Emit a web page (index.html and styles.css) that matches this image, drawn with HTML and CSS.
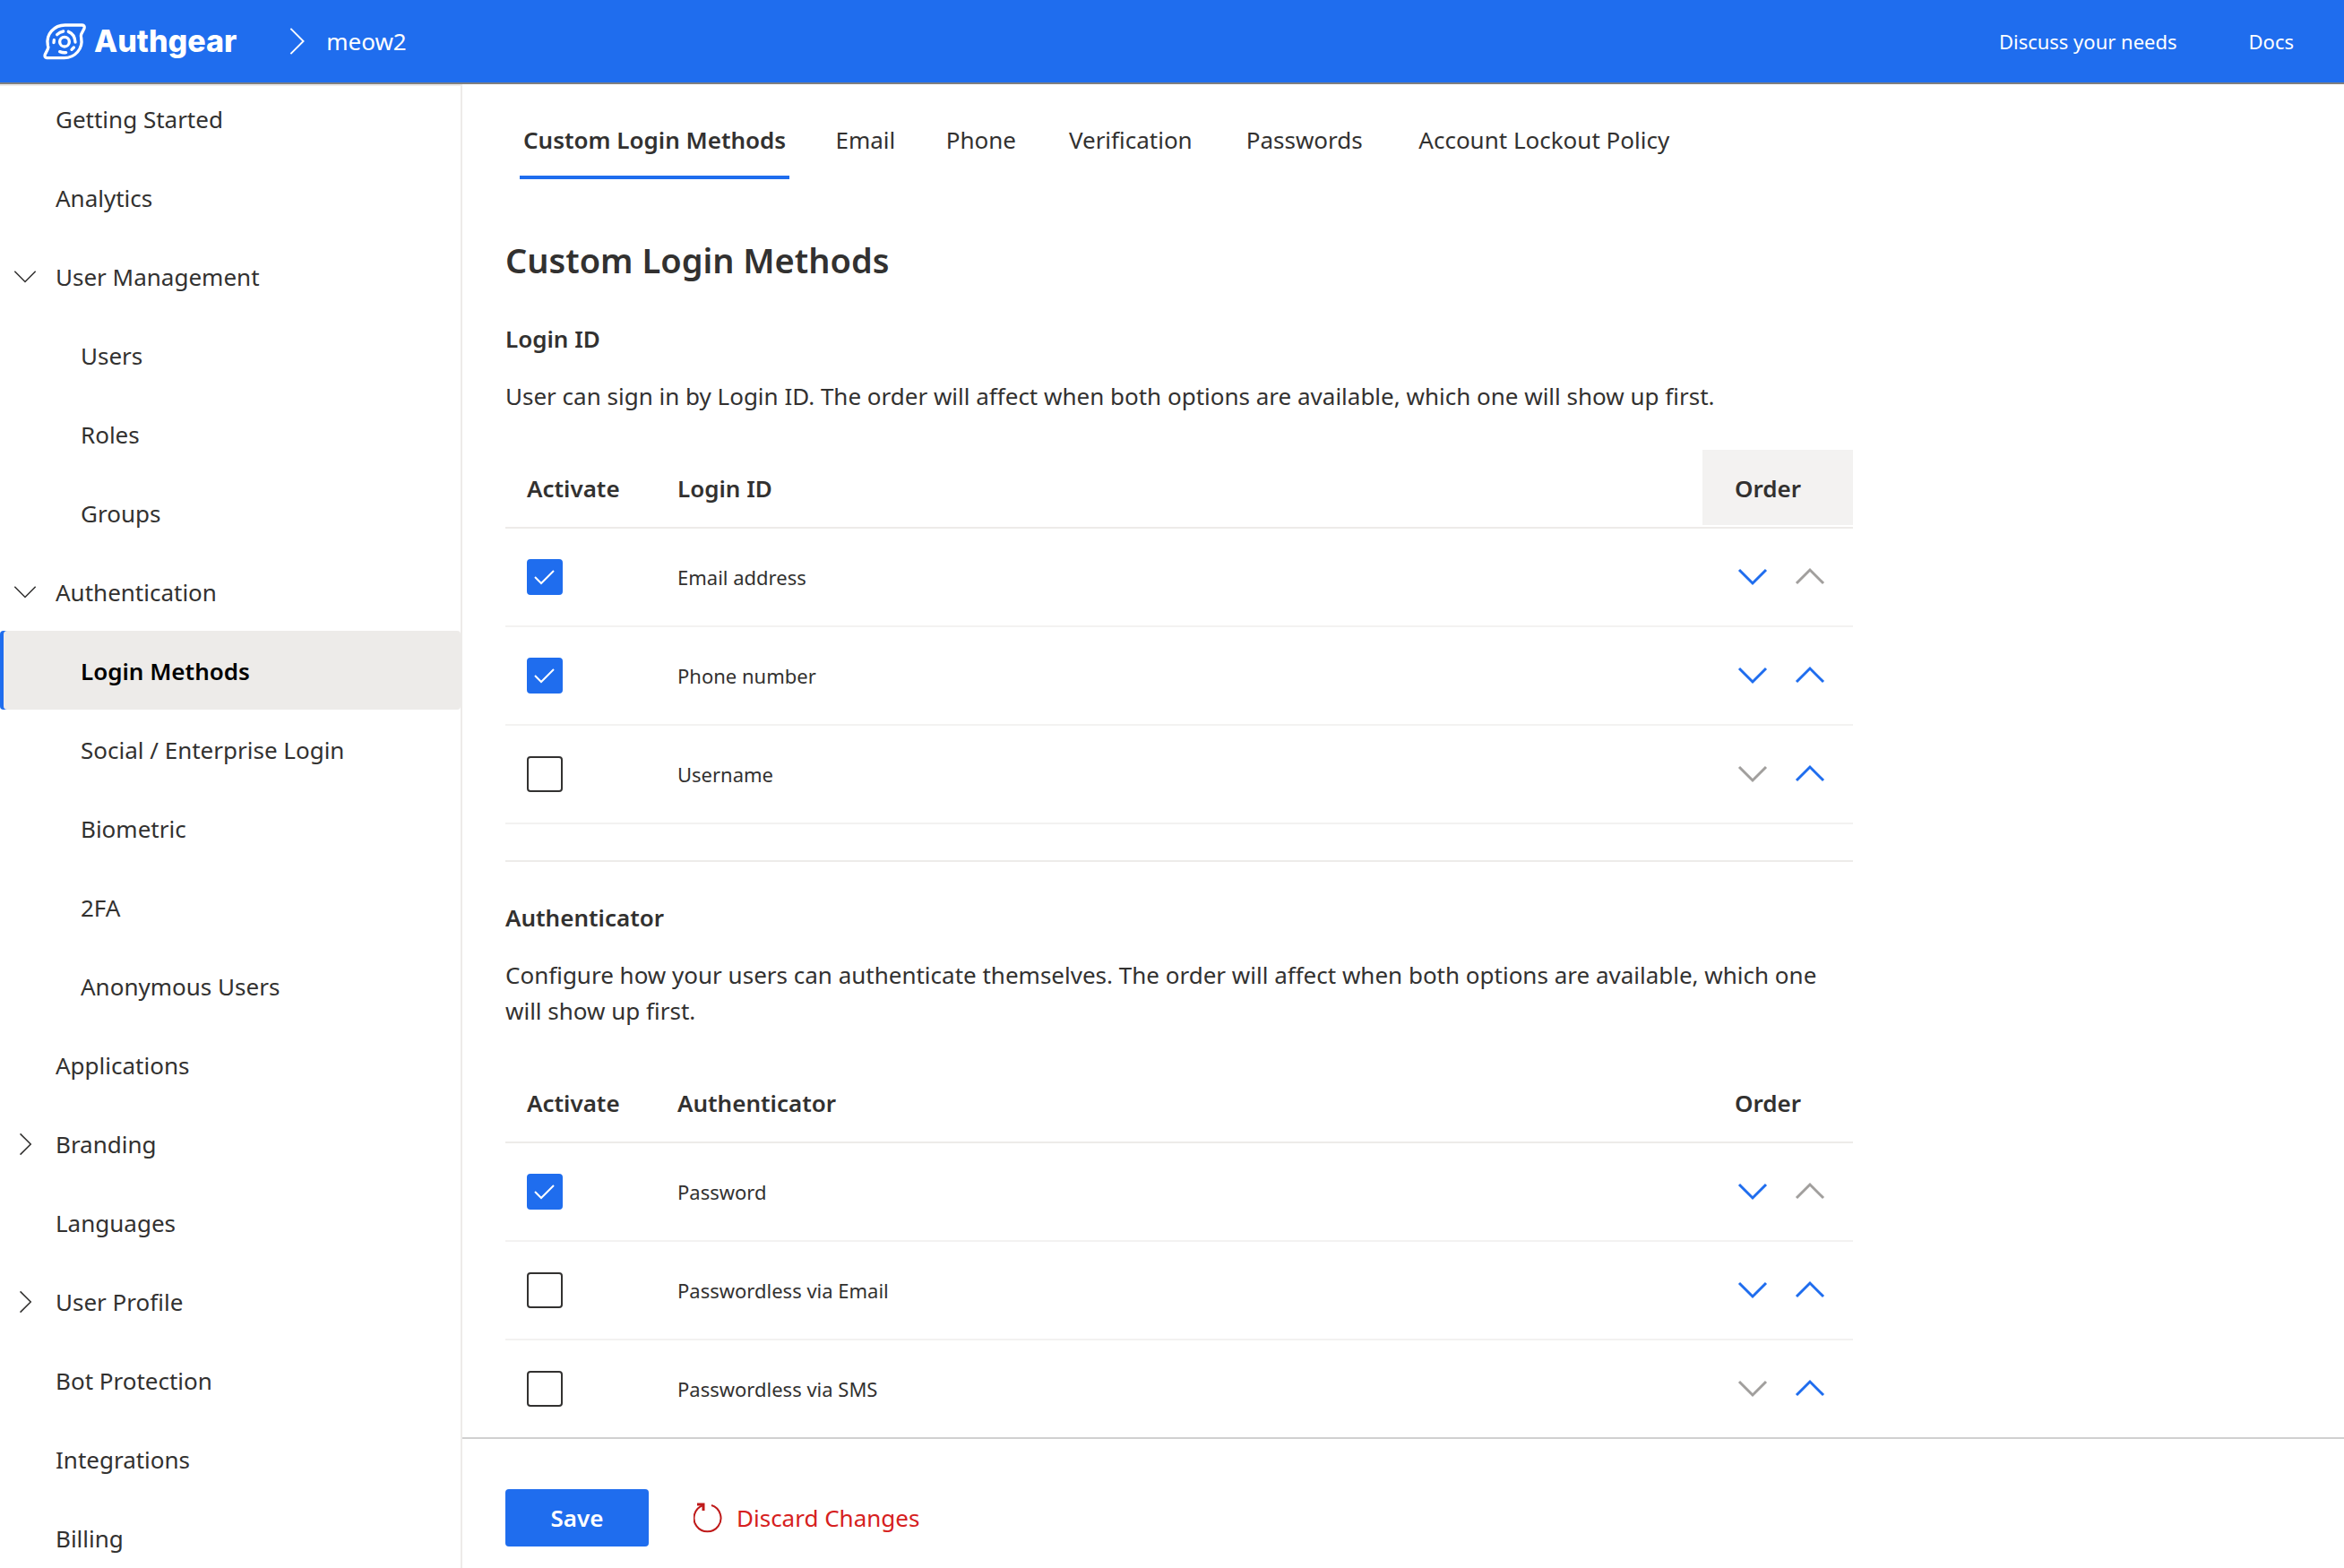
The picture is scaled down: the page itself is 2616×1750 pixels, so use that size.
FILE: index.html
```html
<!DOCTYPE html>
<html lang="en">
<head>
<meta charset="utf-8">
<meta name="viewport" content="width=device-width, initial-scale=1">
<title>Login Methods - Authgear</title>
<link rel="stylesheet" href="styles.css">
</head>
<body>
<svg class="sprite" aria-hidden="true">
  <symbol id="chevron-down" viewBox="0 0 36 36"><path d="M3 10 18 25 33 10" fill="none" stroke="currentColor"/></symbol>
  <symbol id="chevron-up" viewBox="0 0 36 36"><path d="M3 25 18 10 33 25" fill="none" stroke="currentColor"/></symbol>
  <symbol id="chevron-right" viewBox="0 0 36 36"><path d="M11 3 26 18 11 33" fill="none" stroke="currentColor"/></symbol>
</svg>

<header class="topbar">
  <a class="brand" href="#">
    <svg class="brand-mark" viewBox="50 40 150 126" aria-hidden="true">
      <g fill="none" stroke="#fff" stroke-width="10" stroke-linecap="round" stroke-linejoin="round">
        <path d="M127 49H184Q194 50 191 60L181 80Q179 86 181 92C188 128 160 159 124 159H66Q56 157 60 147L69 129Q72 123 69 116C62 80 90 49 127 49Z"/>
        <circle cx="125" cy="105" r="16"/>
        <path d="M90 99 89 108M100 81Q109 72 121 70M138 71Q159 79 161 106M149 131 156 124M109 138Q119 142 130 141"/>
      </g>
    </svg>
    <span class="brand-name">Authgear</span>
  </a>
  <svg class="crumb-icon" aria-hidden="true"><use href="#chevron-right"/></svg>
  <a class="crumb" href="#">meow2</a>
  <nav class="topbar-links">
    <a href="#">Discuss your needs</a>
    <a href="#">Docs</a>
  </nav>
</header>

<div class="shell">
  <aside class="sidebar">
    <nav class="menu">
      <a class="item" href="#">Getting Started</a>
      <a class="item" href="#">Analytics</a>
      <a class="item" href="#"><svg class="item-icon"><use href="#chevron-down"/></svg>User Management</a>
      <a class="item sub" href="#">Users</a>
      <a class="item sub" href="#">Roles</a>
      <a class="item sub" href="#">Groups</a>
      <a class="item" href="#"><svg class="item-icon"><use href="#chevron-down"/></svg>Authentication</a>
      <a class="item sub current" href="#" aria-current="page">Login Methods</a>
      <a class="item sub" href="#">Social / Enterprise Login</a>
      <a class="item sub" href="#">Biometric</a>
      <a class="item sub" href="#">2FA</a>
      <a class="item sub" href="#">Anonymous Users</a>
      <a class="item" href="#">Applications</a>
      <a class="item" href="#"><svg class="item-icon"><use href="#chevron-right"/></svg>Branding</a>
      <a class="item" href="#">Languages</a>
      <a class="item" href="#"><svg class="item-icon"><use href="#chevron-right"/></svg>User Profile</a>
      <a class="item" href="#">Bot Protection</a>
      <a class="item" href="#">Integrations</a>
      <a class="item" href="#">Billing</a>
    </nav>
  </aside>

  <main class="main">
    <div class="content">
      <div class="tabs" role="tablist">
        <button class="tab selected" role="tab" aria-selected="true" data-label="Custom Login Methods">Custom Login Methods</button>
        <button class="tab" role="tab" data-label="Email">Email</button>
        <button class="tab" role="tab" data-label="Phone">Phone</button>
        <button class="tab" role="tab" data-label="Verification">Verification</button>
        <button class="tab" role="tab" data-label="Passwords">Passwords</button>
        <button class="tab" role="tab" data-label="Account Lockout Policy">Account Lockout Policy</button>
      </div>

      <h1 class="title">Custom Login Methods</h1>

      <section class="section">
        <h2 class="heading">Login ID</h2>
        <p class="text">User can sign in by Login ID. The order will affect when both options are available, which one will show up first.</p>
        <table class="list">
          <thead><tr><th class="col-check">Activate</th><th>Login ID</th><th class="col-order"><span class="order-label hovered">Order</span></th></tr></thead>
          <tbody>
            <tr>
              <td><input class="check" type="checkbox" id="email" checked></td>
              <td><label for="email">Email address</label></td>
              <td><div class="arrows"><button class="arrow" aria-label="Move down"><svg><use href="#chevron-down"/></svg></button><button class="arrow" aria-label="Move up" disabled><svg><use href="#chevron-up"/></svg></button></div></td>
            </tr>
            <tr>
              <td><input class="check" type="checkbox" id="phone" checked></td>
              <td><label for="phone">Phone number</label></td>
              <td><div class="arrows"><button class="arrow" aria-label="Move down"><svg><use href="#chevron-down"/></svg></button><button class="arrow" aria-label="Move up"><svg><use href="#chevron-up"/></svg></button></div></td>
            </tr>
            <tr>
              <td><input class="check" type="checkbox" id="username"></td>
              <td><label for="username">Username</label></td>
              <td><div class="arrows"><button class="arrow" aria-label="Move down" disabled><svg><use href="#chevron-down"/></svg></button><button class="arrow" aria-label="Move up"><svg><use href="#chevron-up"/></svg></button></div></td>
            </tr>
          </tbody>
        </table>
      </section>

      <hr class="rule">

      <section class="section">
        <h2 class="heading">Authenticator</h2>
        <p class="text">Configure how your users can authenticate themselves. The order will affect when both options are available, which one will show up first.</p>
        <table class="list">
          <thead><tr><th class="col-check">Activate</th><th>Authenticator</th><th class="col-order"><span class="order-label">Order</span></th></tr></thead>
          <tbody>
            <tr>
              <td><input class="check" type="checkbox" id="password" checked></td>
              <td><label for="password">Password</label></td>
              <td><div class="arrows"><button class="arrow" aria-label="Move down"><svg><use href="#chevron-down"/></svg></button><button class="arrow" aria-label="Move up" disabled><svg><use href="#chevron-up"/></svg></button></div></td>
            </tr>
            <tr>
              <td><input class="check" type="checkbox" id="otp-email"></td>
              <td><label for="otp-email">Passwordless via Email</label></td>
              <td><div class="arrows"><button class="arrow" aria-label="Move down"><svg><use href="#chevron-down"/></svg></button><button class="arrow" aria-label="Move up"><svg><use href="#chevron-up"/></svg></button></div></td>
            </tr>
            <tr>
              <td><input class="check" type="checkbox" id="otp-sms"></td>
              <td><label for="otp-sms">Passwordless via SMS</label></td>
              <td><div class="arrows"><button class="arrow" aria-label="Move down" disabled><svg><use href="#chevron-down"/></svg></button><button class="arrow" aria-label="Move up"><svg><use href="#chevron-up"/></svg></button></div></td>
            </tr>
          </tbody>
        </table>
      </section>
    </div>

    <footer class="actions">
      <button class="save">Save</button>
      <button class="discard">
        <svg class="discard-icon" viewBox="0 0 32 34" aria-hidden="true"><g fill="none" stroke="currentColor"><path d="M4 2H11V9" stroke-width="3"/><path d="M11 3A15 15 0 1 0 20 3" stroke-width="2"/></g></svg>
        Discard Changes
      </button>
    </footer>
  </main>
</div>
</body>
</html>
```
FILE: styles.css
```css
:root {
  --blue: #1f6dee;
  --text: #323130;
  --line: #edebe9;
  --line-light: #f3f2f1;
  --muted: #a19f9d;
}

* { box-sizing: border-box; }

body {
  margin: 0;
  height: 100vh;
  display: flex;
  flex-direction: column;
  overflow: hidden;
  background: #fff;
  color: var(--text);
  font-family: "Noto Sans", "Open Sans", sans-serif;
  font-size: 26px;
  line-height: 40px;
}

a { color: inherit; text-decoration: none; }

button {
  padding: 0;
  border: 0;
  background: none;
  color: inherit;
  font: inherit;
}

.sprite { display: none; }

/* Top bar */
.topbar {
  flex: none;
  display: flex;
  align-items: center;
  height: 94px;
  padding: 0 56px 0 47px;
  border-bottom: 2px solid #808080;
  background: var(--blue);
  color: #fff;
}

.brand { display: flex; align-items: center; gap: 8px; }
.brand-mark { width: 50px; height: 42px; }
.brand-name { font: 800 34px/42px Inter, sans-serif; }
.crumb-icon { width: 34px; height: 34px; margin: 0 16px 0 50px; stroke-width: 2px; }
.topbar-links { display: flex; gap: 80px; margin-left: auto; font-size: 22px; }

/* Page shell */
.shell { flex: 1; display: flex; min-height: 0; }

.sidebar {
  flex: none;
  width: 516px;
  overflow: hidden;
  border-top: 2px solid var(--line);
  border-right: 2px solid var(--line);
}

.menu { margin-top: -8px; }

.item {
  position: relative;
  display: flex;
  align-items: center;
  height: 88px;
  padding: 2px 0 0 62px;
}

.item.sub { padding-left: 90px; }

.item.current {
  border-radius: 4px;
  background: #edebe9;
  box-shadow: inset 4px 0 var(--blue);
  color: #000;
  font-weight: 600;
}

.item-icon { position: absolute; left: 14px; width: 28px; height: 28px; stroke-width: 2px; }

.main { flex: 1; display: flex; flex-direction: column; min-width: 0; }

.content { flex: 1; min-height: 0; overflow: hidden; padding: 22px 48px 0; }
.content > * { max-width: 1504px; }

/* Tabs */
.tabs { display: flex; gap: 46px; padding-left: 16px; }

.tab {
  display: grid;
  padding: 20px 4px;
  border-bottom: 4px solid transparent;
  white-space: nowrap;
}

/* Reserves the bold width so that the row does not shift on selection */
.tab::after {
  content: attr(data-label);
  height: 0;
  overflow: hidden;
  visibility: hidden;
  font-weight: 600;
}

.tab.selected { border-color: var(--blue); font-weight: 600; }

/* Sections */
.title { margin: 62px 0 0; font-size: 38px; font-weight: 600; line-height: 56px; }
.heading { margin: 40px 0 0; font-size: 26px; font-weight: 600; line-height: 40px; }
.text { margin: 24px 0 40px; }

.list { width: 100%; border-collapse: separate; border-spacing: 0; table-layout: fixed; }
.list th { height: 88px; padding: 0 24px; border-bottom: 2px solid var(--line); font-weight: 600; text-align: left; }
.list td { height: 110px; padding: 0 24px; border-bottom: 2px solid var(--line-light); font-size: 22px; }
.list .col-check { width: 168px; }
.list .col-order { width: 168px; padding: 0; }
.list td:last-child { padding: 0; }

.order-label { display: block; margin-bottom: 2px; padding: 23px 36px 21px; }
.order-label.hovered { background: #f3f2f1; }

.check {
  appearance: none;
  display: block;
  width: 40px;
  height: 40px;
  margin: 0;
  border: 2px solid var(--text);
  border-radius: 4px;
}

.check:checked {
  border-color: var(--blue);
  background: var(--blue) url("data:image/svg+xml,%3Csvg xmlns='http://www.w3.org/2000/svg' viewBox='0 0 36 36'%3E%3Cpath d='M7 18 14 25 28 11' fill='none' stroke='%23fff' stroke-width='2'/%3E%3C/svg%3E");
}

.arrows { display: flex; gap: 28px; padding-left: 38px; }
.arrow { display: flex; color: var(--blue); }
.arrow svg { width: 36px; height: 36px; stroke-width: 3px; }
.arrow:disabled { color: var(--muted); }

.rule { height: 2px; margin: 40px 0 42px; border: 0; background: var(--line); }

/* Footer actions */
.actions {
  flex: none;
  display: flex;
  gap: 50px;
  padding: 56px 48px 24px;
  border-top: 2px solid #d0d0d0;
  background: #fff;
}

.save {
  width: 160px;
  height: 64px;
  border-radius: 4px;
  background: var(--blue);
  color: #fff;
  font-weight: 600;
}

.discard { display: flex; align-items: center; gap: 16px; color: #d62020; }
.discard-icon { width: 32px; height: 34px; color: #bf1a1a; }
```
